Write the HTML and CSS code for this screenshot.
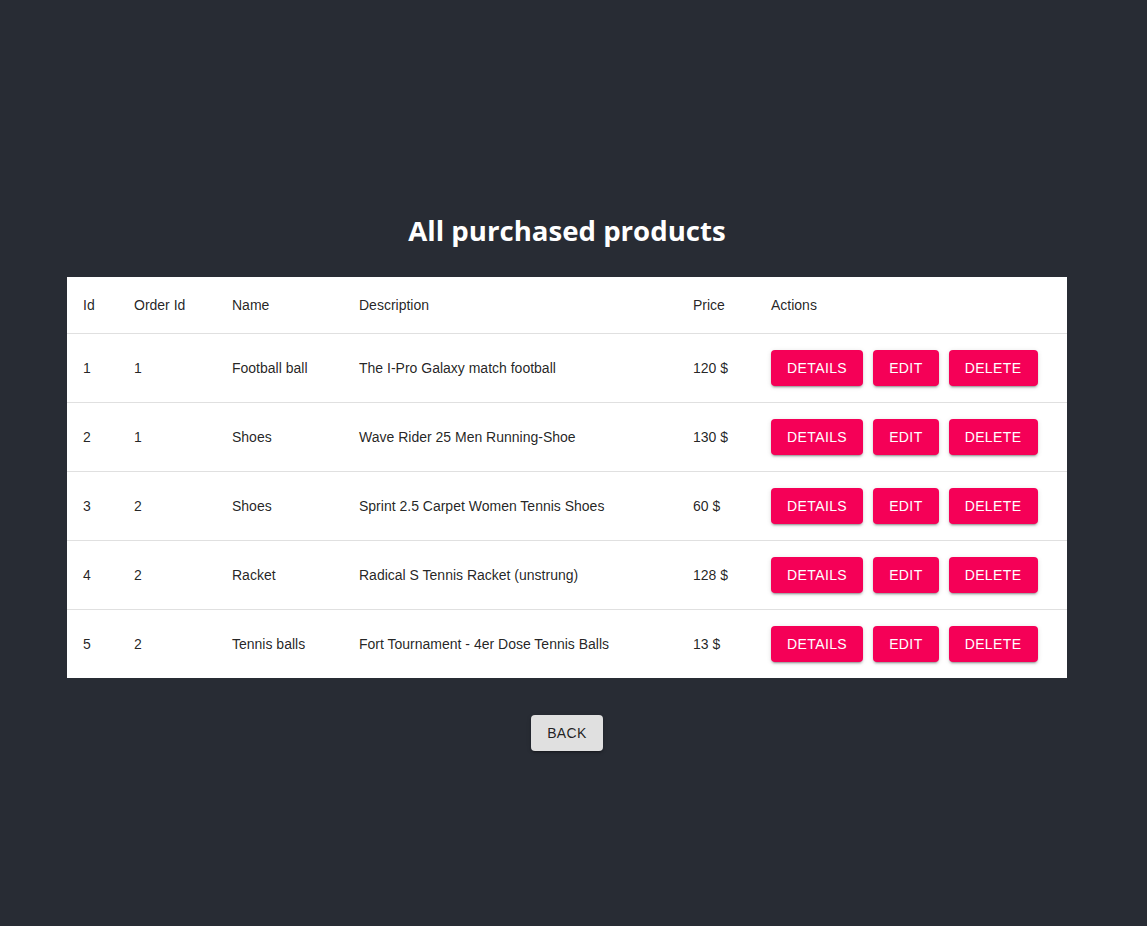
FILE: index.html
```html
<!DOCTYPE html>
<html>
<head>
<meta charset="utf-8">
<link rel="stylesheet" href="styles.css">
</head>
<body>
<div class="page">
  <h2 class="title">All purchased products</h2>
  <table class="table">
    <thead>
      <tr>
        <th class="c-id">Id</th>
        <th class="c-order">Order Id</th>
        <th class="c-name">Name</th>
        <th class="c-desc">Description</th>
        <th class="c-price">Price</th>
        <th class="c-actions">Actions</th>
      </tr>
    </thead>
    <tbody>
      <tr>
        <td>1</td><td>1</td><td>Football ball</td><td>The I-Pro Galaxy match football</td><td>120 $</td>
        <td><div class="actions"><button class="btn pink">Details</button><button class="btn pink">Edit</button><button class="btn pink">Delete</button></div></td>
      </tr>
      <tr>
        <td>2</td><td>1</td><td>Shoes</td><td>Wave Rider 25 Men Running-Shoe</td><td>130 $</td>
        <td><div class="actions"><button class="btn pink">Details</button><button class="btn pink">Edit</button><button class="btn pink">Delete</button></div></td>
      </tr>
      <tr>
        <td>3</td><td>2</td><td>Shoes</td><td>Sprint 2.5 Carpet Women Tennis Shoes</td><td>60 $</td>
        <td><div class="actions"><button class="btn pink">Details</button><button class="btn pink">Edit</button><button class="btn pink">Delete</button></div></td>
      </tr>
      <tr>
        <td>4</td><td>2</td><td>Racket</td><td>Radical S Tennis Racket (unstrung)</td><td>128 $</td>
        <td><div class="actions"><button class="btn pink">Details</button><button class="btn pink">Edit</button><button class="btn pink">Delete</button></div></td>
      </tr>
      <tr class="last">
        <td>5</td><td>2</td><td>Tennis balls</td><td>Fort Tournament - 4er Dose Tennis Balls</td><td>13 $</td>
        <td><div class="actions"><button class="btn pink">Details</button><button class="btn pink">Edit</button><button class="btn pink">Delete</button></div></td>
      </tr>
    </tbody>
  </table>
  <button class="btn grey back">Back</button>
</div>
</body>
</html>
```

FILE: styles.css
```css
html, body {
  margin: 0;
  padding: 0;
  background: #282c34;
  height: 100%;
}
.page {
  display: flex;
  flex-direction: column;
  align-items: center;
  padding-top: 213px;
  padding-right: 13px;
  font-family: "Liberation Sans", Arial, sans-serif;
}
.title {
  margin: 0 0 30px 0;
  color: #ffffff;
  font-family: "Open Sans", "DejaVu Sans", sans-serif;
  font-weight: 700;
  font-size: 27.6px;
  line-height: 34px;
}
.table {
  width: 1000px;
  background: #ffffff;
  border-collapse: collapse;
  border-spacing: 0;
  table-layout: fixed;
}
.table th, .table td {
  text-align: left;
  padding: 16px;
  font-size: 14px;
  line-height: 20px;
  color: rgba(0, 0, 0, 0.87);
  border-bottom: 1px solid #e0e0e0;
  font-weight: 400;
  vertical-align: middle;
}
.table td {
  padding: 16px;
  line-height: 36px;
}
.table tr.last td {
  border-bottom: none;
}
.table th {
  padding: 18px 16px 18px;
  line-height: 20px;
}
.c-id { width: 19px; }
.c-order { width: 66px; }
.c-name { width: 95px; }
.c-desc { width: 302px; }
.c-price { width: 46px; }
.actions {
  display: flex;
  gap: 10px;
}
.btn {
  font-family: "Liberation Sans", Arial, sans-serif;
  font-size: 14px;
  text-transform: uppercase;
  letter-spacing: 0.4px;
  height: 36px;
  min-width: 64px;
  padding: 0 16px;
  border: none;
  border-radius: 4px;
  line-height: 36px;
  cursor: pointer;
  box-shadow: 0 3px 1px -2px rgba(0,0,0,0.2), 0 2px 2px 0 rgba(0,0,0,0.14), 0 1px 5px 0 rgba(0,0,0,0.12);
}
.pink {
  background: #f50057;
  color: #ffffff;
}
.grey {
  background: #e0e0e0;
  color: rgba(0, 0, 0, 0.87);
}
.back {
  margin-top: 37px;
}
```
